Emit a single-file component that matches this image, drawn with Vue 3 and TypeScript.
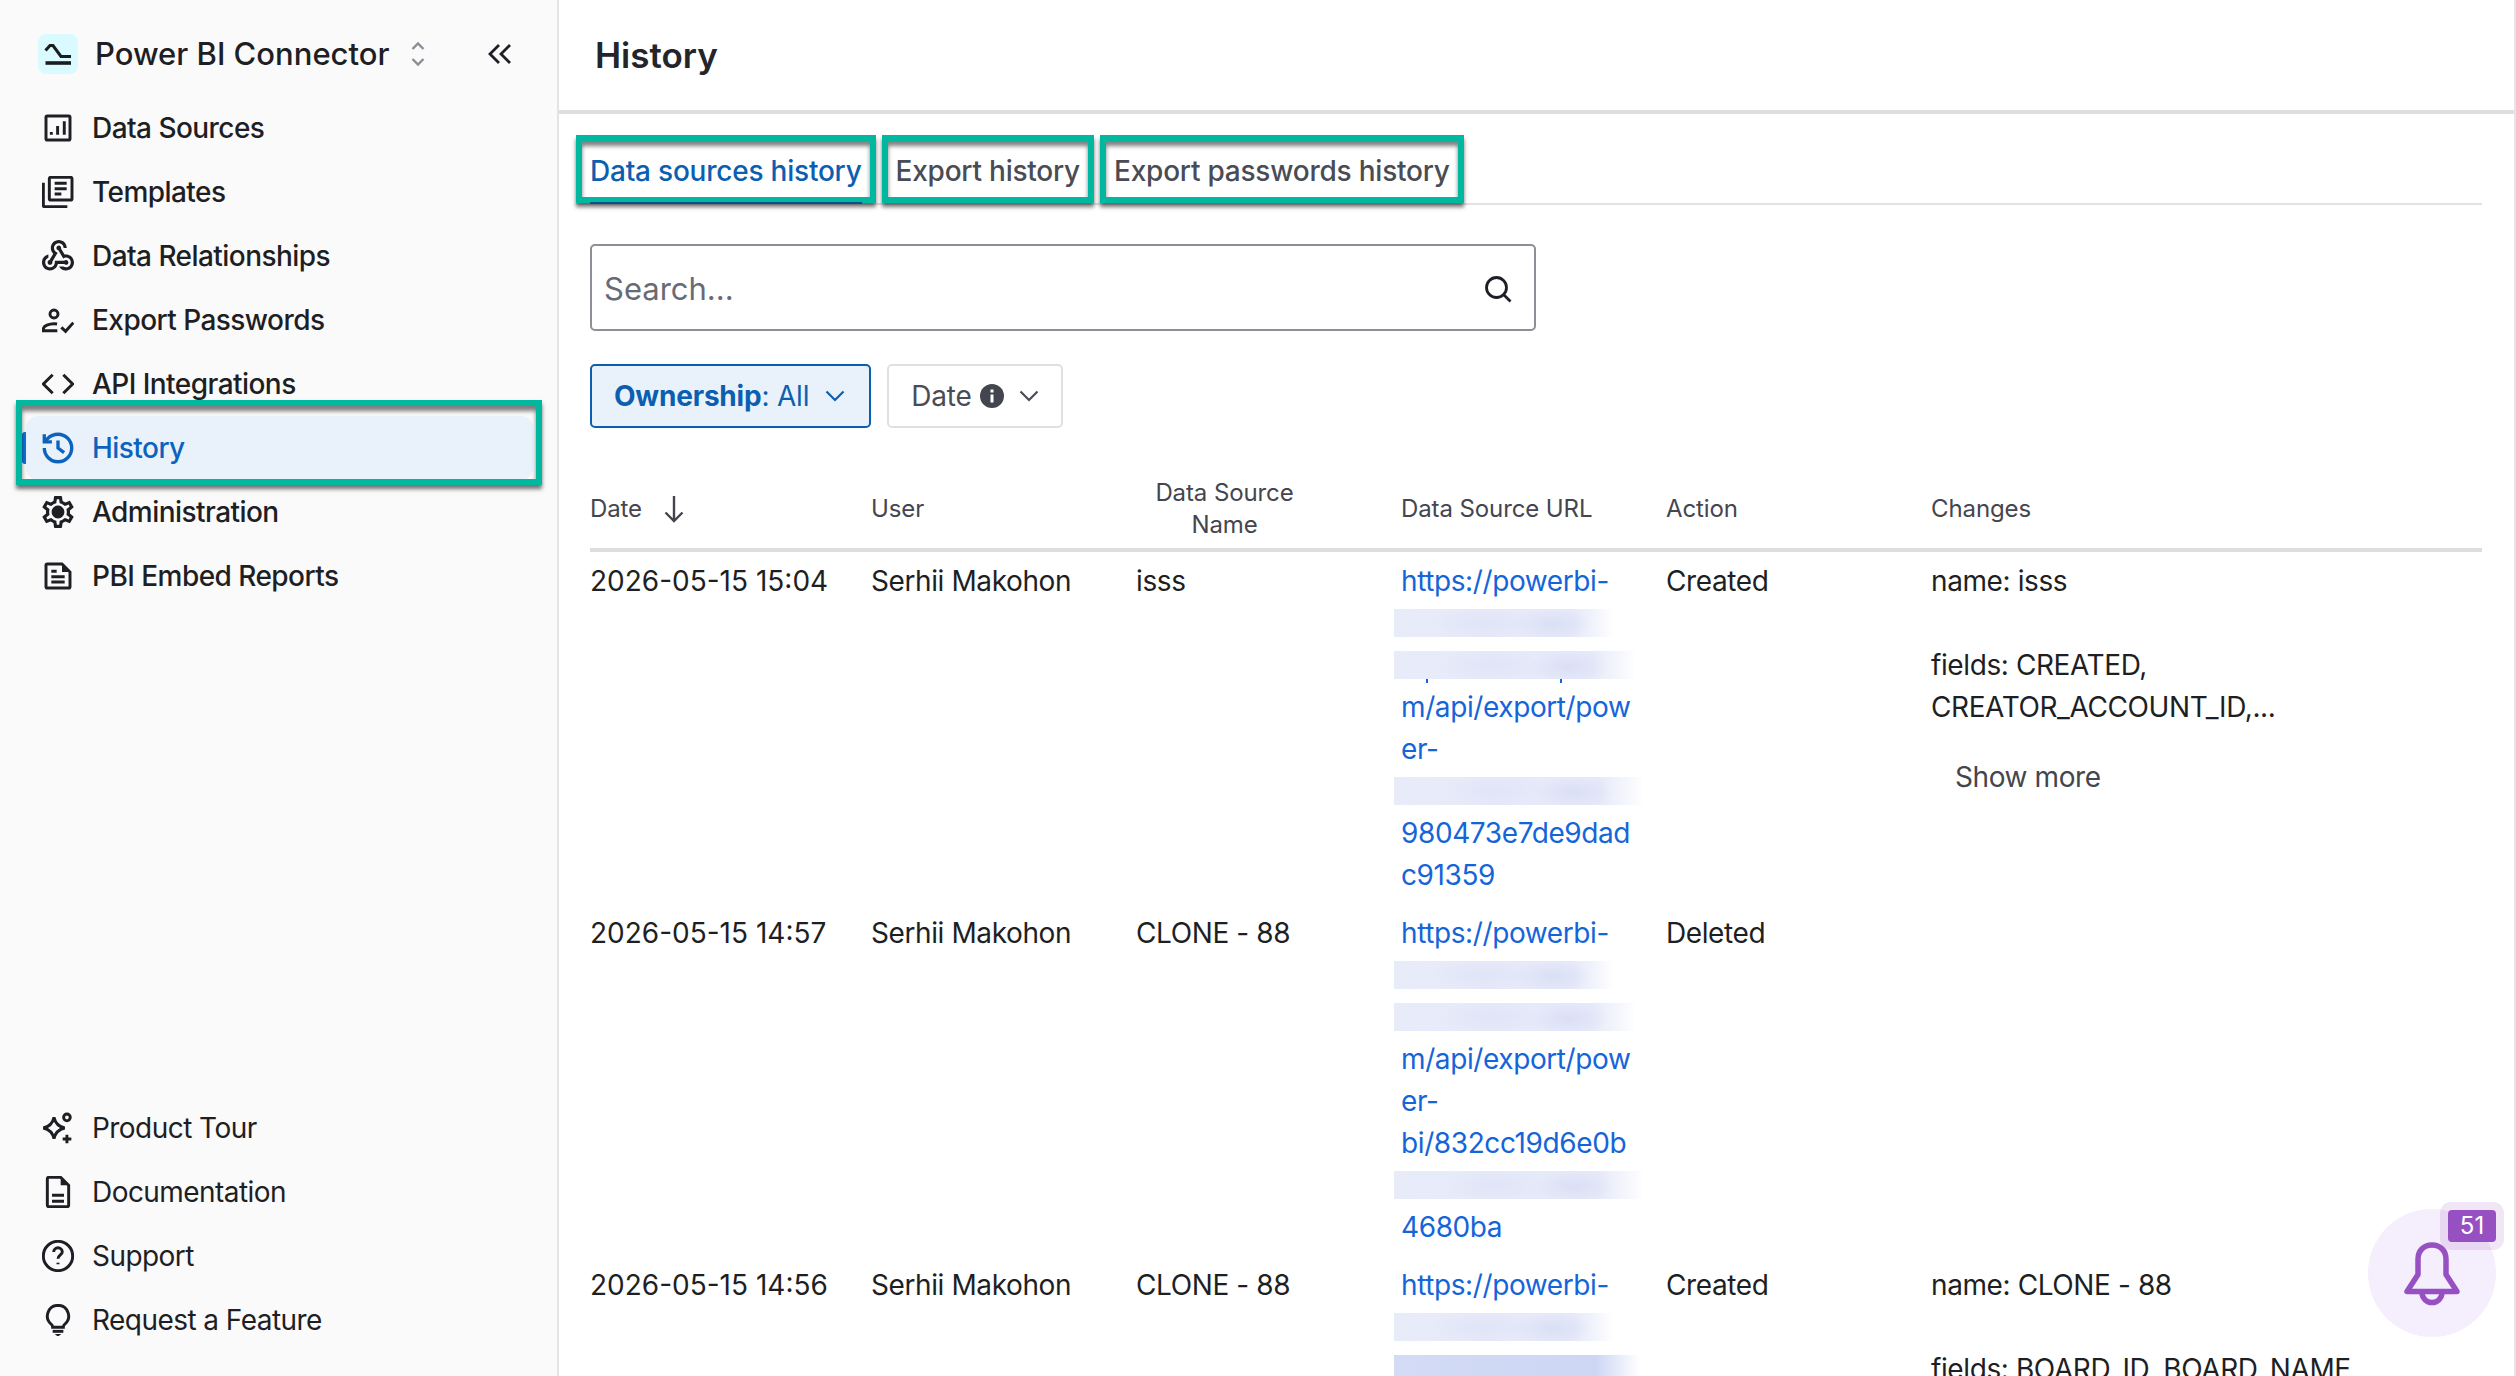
<script setup lang="ts">
type IconPart = { d: string; solid?: boolean }
type NavItem = { label: string; icon: IconPart[]; box?: string; active?: boolean }
type UrlLine = { text?: string; redact?: 'short' | 'mid' | 'long' | 'dark'; ticks?: boolean }
type Row = {
  date: string
  user: string
  name: string
  url: UrlLine[]
  action: string
  changes: string[][]
  more?: boolean
}

const gearPath =
  'M19.43 12.98c.04-.32.07-.64.07-.98 0-.34-.03-.66-.07-.98l2.11-1.65c.19-.15.24-.42.12-.64l-2-3.46c-.09-.16-.26-.25-.44-.25-.06 0-.12.01-.17.03l-2.49 1c-.52-.4-1.08-.73-1.69-.98l-.38-2.65C14.46 2.18 14.25 2 14 2h-4c-.25 0-.46.18-.49.42l-.38 2.65c-.61.25-1.17.59-1.69.98l-2.49-1c-.06-.02-.12-.03-.18-.03-.17 0-.34.09-.43.25l-2 3.46c-.13.22-.07.49.12.64l2.11 1.65c-.04.32-.07.65-.07.98 0 .33.03.66.07.98l-2.11 1.65c-.19.15-.24.42-.12.64l2 3.46c.09.16.26.25.44.25.06 0 .12-.01.17-.03l2.49-1c.52.4 1.08.73 1.69.98l.38 2.65c.03.24.24.42.49.42h4c.25 0 .46-.18.49-.42l.38-2.65c.61-.25 1.17-.59 1.69-.98l2.49 1c.06.02.12.03.18.03.17 0 .34-.09.43-.25l2-3.46c.12-.22.07-.49-.12-.64l-2.11-1.65zm-1.98-1.71c.04.31.05.52.05.73 0 .21-.02.43-.05.73l-.14 1.13.89.7 1.08.84-.7 1.21-1.27-.51-1.04-.42-.9.68c-.43.32-.84.56-1.25.73l-1.06.43-.16 1.13-.2 1.35h-1.4l-.19-1.35-.16-1.13-1.06-.43c-.43-.18-.83-.41-1.23-.71l-.91-.7-1.06.43-1.27.51-.7-1.21 1.08-.84.89-.7-.14-1.13c-.03-.31-.05-.54-.05-.74s.02-.43.05-.73l.14-1.13-.89-.7-1.08-.84.7-1.21 1.27.51 1.04.42.9-.68c.43-.32.84-.56 1.25-.73l1.06-.43.16-1.13.2-1.35h1.39l.19 1.35.16 1.13 1.06.43c.43.18.83.41 1.23.71l.91.7 1.06-.43 1.27-.51.7 1.21-1.07.85-.89.7.14 1.13zM12 8c-2.21 0-4 1.79-4 4s1.79 4 4 4 4-1.79 4-4-1.79-4-4-4z'
const webhookPath =
  'M10 15h5.88c.27-.31.67-.5 1.12-.5.83 0 1.5.67 1.5 1.5s-.67 1.5-1.5 1.5c-.44 0-.84-.19-1.12-.5H11.9c-.46 2.28-2.48 4-4.9 4-2.76 0-5-2.24-5-5 0-2.42 1.72-4.44 4-4.9v2.07c-1.16.41-2 1.53-2 2.83 0 1.65 1.35 3 3 3s3-1.35 3-3v-1zm2.5-11c1.65 0 3 1.35 3 3h2c0-2.76-2.24-5-5-5s-5 2.24-5 5c0 1.43.6 2.71 1.55 3.62l-2.35 3.9c-.68.14-1.2.75-1.2 1.48 0 .83.67 1.5 1.5 1.5s1.5-.67 1.5-1.5c0-.16-.02-.31-.07-.45l3.38-5.63C10.49 9.61 9.5 8.42 9.5 7c0-1.65 1.35-3 3-3zm4.5 9c-.64 0-1.23.2-1.72.54l-3.05-5.07C11.53 8.35 11 7.74 11 7c0-.83.67-1.5 1.5-1.5S14 6.17 14 7c0 .15-.02.29-.06.43l2.19 3.65c.28-.05.57-.08.87-.08 2.76 0 5 2.24 5 5s-2.24 5-5 5c-1.85 0-3.47-1.01-4.33-2.5h2.67c.48.32 1.05.5 1.66.5 1.65 0 3-1.35 3-3s-1.35-3-3-3z'

const topNav: NavItem[] = [
  {
    label: 'Data Sources',
    icon: [
      { d: 'M4 3h16a1 1 0 0 1 1 1v16a1 1 0 0 1-1 1H4a1 1 0 0 1-1-1V4a1 1 0 0 1 1-1z' },
      { d: 'M7 15v2M11.7 10.5V17M16.7 7v10' },
    ],
  },
  {
    label: 'Templates',
    icon: [
      { d: 'M6.5 1h15a1 1 0 0 1 1 1v15a1 1 0 0 1-1 1h-15a1 1 0 0 1-1-1V2a1 1 0 0 1 1-1z' },
      { d: 'M1 5v17a1 1 0 0 0 1 1h17' },
      { d: 'M9.5 5.5h9M9.5 9.5h9M9.5 13.5h5' },
    ],
  },
  { label: 'Data Relationships', box: '2 2 20 20', icon: [{ d: webhookPath, solid: true }] },
  {
    label: 'Export Passwords',
    icon: [
      { d: 'M9 4.500a3 3 0 1 1 0 6 3 3 0 0 1 0-6z' },
      { d: 'M11.500 20H1v-1.300c0-2.300 4.500-3.900 8-3.900 .8 0 1.600.1 2.300.2' },
      { d: 'M14.500 17.500l3.200 3 5.800-6.500' },
    ],
  },
  { label: 'API Integrations', icon: [{ d: 'M8 5l-7 7 7 7M16 5l7 7-7 7' }] },
  {
    label: 'History',
    active: true,
    box: '1.500 1.500 21 21',
    icon: [
      { d: 'M3 12a9 9 0 1 0 9-9 9.750 9.750 0 0 0-6.740 2.740L3 8' },
      { d: 'M3 3v5h5' },
      { d: 'M12 7v5l4 3' },
    ],
  },
  { label: 'Administration', box: '2 2 20 20', icon: [{ d: gearPath, solid: true }] },
  {
    label: 'PBI Embed Reports',
    icon: [
      { d: 'M4 3h11l6 6v11a1 1 0 0 1-1 1H4a1 1 0 0 1-1-1V4a1 1 0 0 1 1-1z' },
      { d: 'M15 3l6 6h-6z', solid: true },
      { d: 'M7 8.500h4M7 12.500h10M7 16.500h10' },
    ],
  },
]

const bottomNav: NavItem[] = [
  {
    label: 'Product Tour',
    icon: [
      { d: 'M9 4c1 4.500 3.500 7 8 8-4.500 1-7 3.500-8 8-1-4.500-3.500-7-8-8 4.500-1 7-3.500 8-8z' },
      { d: 'M18.700 1.500a2.500 2.500 0 1 1 0 5 2.500 2.500 0 0 1 0-5z' },
      { d: 'M18.700 17v6.500M15.500 20.200h6.500' },
    ],
  },
  {
    label: 'Documentation',
    icon: [
      { d: 'M5 1h9l6 6v15a1 1 0 0 1-1 1H5a1 1 0 0 1-1-1V2a1 1 0 0 1 1-1z' },
      { d: 'M14 1l6 6h-6z', solid: true },
      { d: 'M7.500 14.500h9M7.500 19h9' },
    ],
  },
  {
    label: 'Support',
    icon: [
      { d: 'M12 1a11 11 0 1 1 0 22 11 11 0 0 1 0-22z' },
      { d: 'M8.800 9a3.200 3.200 0 0 1 6.400 0c0 2-3.200 2.500-3.200 5' },
      { d: 'M12 17v1.200' },
    ],
  },
  {
    label: 'Request a Feature',
    icon: [
      { d: 'M12 1a8 8 0 0 1 5 14.200c-.8.700-1 1.500-1 2.300H8c0-.8-.2-1.600-1-2.300A8 8 0 0 1 12 1z' },
      { d: 'M8 20.500h8' },
      { d: 'M9.500 22.500h5L12 24.500z', solid: true },
    ],
  },
]

const rows: Row[] = [
  {
    date: '2026-05-15 15:04',
    user: 'Serhii Makohon',
    name: 'isss',
    url: [
      { text: 'https://powerbi-' },
      { redact: 'short' },
      { redact: 'mid', ticks: true },
      { text: 'm/api/export/pow' },
      { text: 'er-' },
      { redact: 'long' },
      { text: '980473e7de9dad' },
      { text: 'c91359' },
    ],
    action: 'Created',
    changes: [['name: isss'], ['fields: CREATED,', 'CREATOR_ACCOUNT_ID,...']],
    more: true,
  },
  {
    date: '2026-05-15 14:57',
    user: 'Serhii Makohon',
    name: 'CLONE - 88',
    url: [
      { text: 'https://powerbi-' },
      { redact: 'short' },
      { redact: 'mid' },
      { text: 'm/api/export/pow' },
      { text: 'er-' },
      { text: 'bi/832cc19d6e0b' },
      { redact: 'long' },
      { text: '4680ba' },
    ],
    action: 'Deleted',
    changes: [],
  },
  {
    date: '2026-05-15 14:56',
    user: 'Serhii Makohon',
    name: 'CLONE - 88',
    url: [{ text: 'https://powerbi-' }, { redact: 'short' }, { redact: 'dark' }],
    action: 'Created',
    changes: [['name: CLONE - 88'], ['fields: BOARD_ID, BOARD_NAME,']],
  },
]
</script>

<template>
  <div class="page">
    <aside class="sidebar">
      <div class="brand">
        <span class="logo">
          <svg viewBox="0 0 40 40" width="40" height="40" fill="none" stroke="#1b1c20" stroke-width="3">
            <path d="M7.500 16.500 12 11.500h3l8 11h10" />
            <path d="M7.500 29H33" stroke-width="3.600" />
          </svg>
        </span>
        <span class="brand-name">Power BI Connector</span>
        <svg class="updown" viewBox="0 0 14 26" width="14" height="26" fill="none" stroke="#8b8e96" stroke-width="2.400">
          <path d="M1.500 8 7 2.500 12.500 8M1.500 18 7 23.500 12.500 18" />
        </svg>
        <svg class="collapse" viewBox="0 0 26 24" width="26" height="24" fill="none" stroke="#1e1f24" stroke-width="2.800">
          <path d="M12 3 3 12l9 9M23 3l-9 9 9 9" />
        </svg>
      </div>

      <nav class="nav">
        <a v-for="item in topNav" :key="item.label" class="nav-item" :class="{ active: item.active }">
          <svg class="nav-icon" :viewBox="item.box || '0 0 24 24'" width="32" height="32" fill="none" stroke="currentColor" stroke-width="2.200">
            <path
              v-for="part in item.icon"
              :key="part.d"
              :d="part.d"
              :fill="part.solid ? 'currentColor' : 'none'"
              :stroke="part.solid ? 'none' : 'currentColor'"
            />
          </svg>
          <span>{{ item.label }}</span>
          <i v-if="item.active" class="mark nav-mark"></i>
        </a>
      </nav>

      <nav class="nav nav-bottom">
        <a v-for="item in bottomNav" :key="item.label" class="nav-item">
          <svg class="nav-icon" :viewBox="item.box || '0 0 24 24'" width="32" height="32" fill="none" stroke="currentColor" stroke-width="2.200">
            <path
              v-for="part in item.icon"
              :key="part.d"
              :d="part.d"
              :fill="part.solid ? 'currentColor' : 'none'"
              :stroke="part.solid ? 'none' : 'currentColor'"
            />
          </svg>
          <span>{{ item.label }}</span>
        </a>
      </nav>
    </aside>

    <main class="main">
      <header class="topbar">
        <h1>History</h1>
      </header>

      <div class="content">
        <div class="tabs">
          <button class="tab mark current">Data sources history</button>
          <button class="tab mark">Export history</button>
          <button class="tab mark">Export passwords history</button>
        </div>

        <label class="search">
          <input type="text" placeholder="Search..." />
          <svg viewBox="0 0 28 28" width="28" height="28" fill="none" stroke="#1e1f24" stroke-width="2.800">
            <path d="M12.500 2.500a10 10 0 1 1 0 20 10 10 0 0 1 0-20zM20 20l6.500 6.500" />
          </svg>
        </label>

        <div class="filters">
          <button class="filter on">
            <span><b>Ownership</b>: All</span>
            <svg viewBox="0 0 20 12" width="20" height="12" fill="none" stroke="currentColor" stroke-width="2.200">
              <path d="M1.500 1.500 10 10l8.500-8.500" />
            </svg>
          </button>
          <button class="filter">
            <span>Date</span>
            <svg class="info" viewBox="0 0 24 24" width="24" height="24">
              <circle cx="12" cy="12" r="12" fill="#44464f" />
              <rect x="10.500" y="10.500" width="3" height="8" fill="#fff" />
              <rect x="10.500" y="5.500" width="3" height="3" fill="#fff" />
            </svg>
            <svg class="chev" viewBox="0 0 20 12" width="20" height="12" fill="none" stroke="currentColor" stroke-width="2.200">
              <path d="M1.500 1.500 10 10l8.500-8.500" />
            </svg>
          </button>
        </div>

        <table class="grid">
          <colgroup>
            <col class="c-date" />
            <col class="c-user" />
            <col class="c-name" />
            <col class="c-url" />
            <col class="c-action" />
            <col />
          </colgroup>
          <thead>
            <tr>
              <th>
                <span class="sort">
                  Date
                  <svg viewBox="0 0 24 30" width="24" height="30" fill="none" stroke="#44464f" stroke-width="2.400">
                    <path d="M12 2v25M3.500 18.500 12 27l8.500-8.500" />
                  </svg>
                </span>
              </th>
              <th>User</th>
              <th class="centered">Data Source<br />Name</th>
              <th>Data Source URL</th>
              <th>Action</th>
              <th>Changes</th>
            </tr>
          </thead>
          <tbody>
            <tr v-for="row in rows" :key="row.date">
              <td class="date">{{ row.date }}</td>
              <td>{{ row.user }}</td>
              <td>{{ row.name }}</td>
              <td>
                <template v-for="(line, i) in row.url" :key="i">
                  <a v-if="line.text" class="url-line">{{ line.text }}</a>
                  <div v-else class="url-line"><span class="redact" :class="[line.redact, { ticks: line.ticks }]"></span></div>
                </template>
              </td>
              <td>{{ row.action }}</td>
              <td>
                <p v-for="block in row.changes" :key="block[0]" class="change">
                  <span v-for="text in block" :key="text">{{ text }}</span>
                </p>
                <button v-if="row.more" class="more">Show more</button>
              </td>
            </tr>
          </tbody>
        </table>
      </div>

      <div class="bell">
        <svg viewBox="0 0 56 64" width="56" height="64" fill="none" stroke="#9750c2" stroke-width="5.500" stroke-linejoin="round">
          <path d="M28 3c-8.500 0-14 6-14 14v15.500L3 49.500h50L42 32.500V17c0-8-5.500-14-14-14z" />
          <path d="M17.500 50c1 6.500 5 10.500 10.500 10.500S37.500 56.500 38.500 50" />
        </svg>
        <span class="badge">51</span>
      </div>
    </main>
  </div>
</template>

<style scoped>
.page {
  display: flex;
  width: 2516px;
  height: 1376px;
  overflow: hidden;
  background: #fff;
  color: #1e1f24;
  font-family: Inter, "Liberation Sans", sans-serif;
  font-size: 28px;
  line-height: 42px;
  letter-spacing: -0.4px;
}

.sidebar {
  display: flex;
  flex-direction: column;
  flex: none;
  box-sizing: border-box;
  width: 559px;
  padding: 34px 24px 24px 26px;
  background: #fafafa;
  border-right: 2px solid #e4e4e6;
}

.brand {
  display: flex;
  align-items: center;
  height: 40px;
  margin-bottom: 22px;
  padding-left: 12px;
}

.logo {
  width: 40px;
  height: 40px;
  border-radius: 8px;
  background: #d9fbff;
}

.brand-name {
  margin-left: 17px;
  font-size: 31px;
  font-weight: 500;
  letter-spacing: 0;
  white-space: nowrap;
}

.updown {
  margin-left: 22px;
}

.collapse {
  margin-left: auto;
  margin-right: 20px;
}

.nav-bottom {
  margin-top: auto;
}

.nav-item {
  position: relative;
  display: flex;
  align-items: center;
  height: 64px;
  gap: 18px;
  padding-left: 16px;
  border-radius: 12px;
  font-size: 28px;
  font-weight: 500;
  letter-spacing: -0.55px;
}

.nav-bottom .nav-item {
  font-weight: 400;
}

.nav-icon {
  flex: none;
}

.nav-item.active {
  background: #e9f2fb;
  color: #0b63bd;
}

.nav-item.active::before {
  content: "";
  position: absolute;
  left: -4px;
  top: 16px;
  width: 4px;
  height: 32px;
  border-radius: 3px 0 0 3px;
  background: #0b72d9;
}

.mark {
  box-sizing: border-box;
  border: 6px solid #00b8a0;
  box-shadow: 0 4px 4px rgba(0, 0, 0, 0.55), inset 0 5px 4px rgba(0, 0, 0, 0.5);
}

.nav-mark {
  position: absolute;
  left: -10px;
  right: -9px;
  top: -16px;
  bottom: -5px;
}

.main {
  position: relative;
  flex: 1;
  min-width: 0;
  border-right: 2px solid #e6e6e6;
}

.topbar {
  display: flex;
  align-items: center;
  height: 110px;
  padding-left: 36px;
  border-bottom: 4px solid #dedede;
}

h1 {
  margin: 0;
  font-size: 35px;
  font-weight: 600;
  letter-spacing: 0;
  color: #23252b;
}

.content {
  padding: 21px 32px 0 31px;
}

.tabs {
  display: flex;
  gap: 6px;
  height: 68px;
  margin-left: -14px;
  border-bottom: 2px solid #e2e2e2;
  box-sizing: content-box;
}

.tab {
  position: relative;
  height: 68px;
  padding: 3px 8px 0;
  background: #fff;
  font: inherit;
  font-size: 28px;
  font-weight: 500;
  letter-spacing: -0.22px;
  color: #4a4c55;
  white-space: nowrap;
}

.tab.current {
  color: #0c5fb0;
}

.tab.current::after {
  content: "";
  position: absolute;
  left: 8px;
  right: 8px;
  bottom: -7px;
  height: 2px;
  background: #0c4f90;
}

.search {
  display: flex;
  align-items: center;
  box-sizing: border-box;
  width: 946px;
  height: 87px;
  margin-top: 39px;
  padding: 2px 22px 0 12px;
  border: 2.500px solid #8c8e98;
  border-radius: 5px;
}

.search input {
  flex: 1;
  min-width: 0;
  border: 0;
  outline: 0;
  padding: 0;
  background: transparent;
  font: inherit;
  font-size: 31px;
  letter-spacing: 0;
  color: #1e1f24;
}

.search input::placeholder {
  color: #686b75;
}

.filters {
  display: flex;
  gap: 16px;
  margin-top: 33px;
}

.filter {
  display: flex;
  align-items: center;
  box-sizing: border-box;
  height: 64px;
  padding: 0 22px;
  background: #fff;
  border: 2.500px solid #e0e0e0;
  border-radius: 5px;
  font: inherit;
  letter-spacing: -0.2px;
  color: #4a4c55;
  gap: 8px;
}

.filter.on {
  gap: 16px;
  padding-right: 24px;
  background: #e9f2fb;
  border-color: #0c5fb0;
  color: #0c5fb0;
}

.filter b {
  font-weight: 700;
}

.chev {
  margin-left: 7px;
}

.grid {
  width: 100%;
  margin-top: 32px;
  table-layout: fixed;
  border-collapse: collapse;
}

.c-date {
  width: 281px;
}

.c-user,
.c-name,
.c-url,
.c-action {
  width: 265px;
}

th {
  height: 78px;
  padding: 10px 0 0;
  border-bottom: 4px solid #dedede;
  font-size: 24px;
  font-weight: 400;
  line-height: 32px;
  letter-spacing: -0.1px;
  text-align: left;
  vertical-align: middle;
  color: #44464f;
}

th.centered {
  padding-right: 88px;
  text-align: center;
}

.sort {
  display: flex;
  align-items: center;
  gap: 20px;
}

td {
  padding: 8px 0;
  vertical-align: top;
}

td.date {
  letter-spacing: 0;
}

.url-line {
  display: block;
  height: 42px;
  color: #1565d8;
  white-space: nowrap;
}

.redact {
  display: block;
  height: 28px;
  margin-left: -7px;
  position: relative;
  top: 7px;
  background:
    radial-gradient(ellipse 40px 16px at 72% 55%, rgba(205, 213, 243, 0.5), transparent),
    radial-gradient(ellipse 50px 18px at 40% 50%, rgba(210, 217, 245, 0.35), transparent),
    linear-gradient(90deg, #e8ebf8 0, #e6e9f8 82%, rgba(232, 235, 248, 0) 100%);
}

.redact.short {
  width: 220px;
}

.redact.mid {
  width: 242px;
}

.redact.long {
  width: 250px;
}

.redact.dark {
  width: 246px;
  background: linear-gradient(90deg, #d3dbf5 0, #cdd7f4 82%, rgba(213, 220, 245, 0) 100%);
}

.redact.ticks::after {
  content: "";
  position: absolute;
  left: 32px;
  top: 28px;
  width: 2px;
  height: 4px;
  background: #1565d8;
  box-shadow: 134px 0 0 #1565d8;
}

.change {
  display: flex;
  flex-direction: column;
  margin: 0 0 42px;
}

.change:has(+ .more) {
  margin-bottom: 0;
}

.more {
  display: block;
  margin-top: 28px;
  padding: 0 0 0 24px;
  border: 0;
  background: none;
  font: inherit;
  letter-spacing: inherit;
  line-height: 42px;
  color: #44464f;
}

.bell {
  position: absolute;
  left: 1809px;
  top: 1209px;
  display: flex;
  align-items: center;
  justify-content: center;
  width: 128px;
  height: 128px;
  border-radius: 50%;
  background: #f5eefc;
}

.bell svg {
  margin-top: 2px;
}

.badge {
  position: absolute;
  left: 80px;
  top: 1px;
  width: 48px;
  height: 32px;
  border-radius: 4px;
  background: #9750c2;
  box-shadow: 0 0 0 8px rgba(151, 80, 194, 0.14);
  color: #fff;
  font-size: 24px;
  line-height: 32px;
  letter-spacing: 0;
  text-align: center;
}
</style>

<style>
html,
body {
  margin: 0;
  overflow: hidden;
}
</style>
